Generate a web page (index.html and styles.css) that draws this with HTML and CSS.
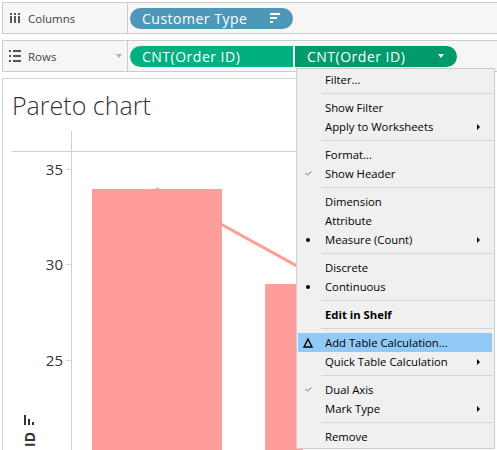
FILE: index.html
```html
<!DOCTYPE html>
<html>
<head>
<meta charset="utf-8">
<link rel="stylesheet" href="styles.css">
</head>
<body>
<div class="app">
  <div class="shelf shelf-columns">
    <div class="shelf-label">
      <svg class="shelf-icon" width="10" height="10" viewBox="0 0 10 10">
        <rect x="0" y="0" width="2" height="2"/><rect x="0" y="3" width="2" height="7"/>
        <rect x="4" y="0" width="2" height="2"/><rect x="4" y="3" width="2" height="7"/>
        <rect x="8" y="0" width="2" height="2"/><rect x="8" y="3" width="2" height="7"/>
      </svg>
      <span class="shelf-name">Columns</span>
    </div>
    <div class="shelf-body">
      <div class="pill pill-dim">
        <span class="pill-text">Customer Type</span>
        <svg class="pill-sort" width="10" height="10" viewBox="0 0 10 10">
          <rect x="0" y="0" width="10" height="2"/><rect x="0" y="4" width="7" height="2"/><rect x="0" y="8" width="3" height="2"/>
        </svg>
      </div>
    </div>
  </div>
  <div class="shelf shelf-rows">
    <div class="shelf-label">
      <svg class="shelf-icon" width="12" height="12" viewBox="0 0 12 12">
        <rect x="0" y="0" width="2" height="2"/><rect x="4" y="0" width="8" height="2"/>
        <rect x="0" y="5" width="2" height="2"/><rect x="4" y="5" width="8" height="2"/>
        <rect x="0" y="10" width="2" height="2"/><rect x="4" y="10" width="8" height="2"/>
      </svg>
      <span class="shelf-name">Rows</span>
      <span class="shelf-caret"></span>
    </div>
    <div class="shelf-body">
      <div class="pill pill-measure pill-left"><span class="pill-text">CNT(Order ID)</span></div>
      <div class="pill pill-measure-dark pill-right"><span class="pill-text">CNT(Order ID)</span><span class="pill-caret"></span></div>
    </div>
  </div>

  <div class="viz">
    <h1 class="viz-title">Pareto chart</h1>
    <svg class="chart" width="300" height="330" viewBox="0 0 300 330">
      <line class="axis" x1="68.5" y1="9" x2="68.5" y2="330"/>
      <line class="axis" x1="9" y1="29.5" x2="293" y2="29.5"/>
      <line class="tick" x1="63" y1="47.5" x2="68" y2="47.5"/>
      <line class="tick" x1="63" y1="142.5" x2="68" y2="142.5"/>
      <line class="tick" x1="63" y1="238.5" x2="68" y2="238.5"/>
      <text class="tick-label" x="60" y="53">35</text>
      <text class="tick-label" x="60" y="148">30</text>
      <text class="tick-label" x="60" y="244">25</text>
      <line class="pareto-line" x1="154" y1="67" x2="327" y2="162"/>
      <rect class="bar" x="89" y="67" width="130" height="270"/>
      <rect class="bar" x="262" y="162" width="130" height="170"/>
      <text class="axis-title" transform="translate(32 310) rotate(-90)">Count of Order ID</text>
      <rect class="axis-sort" x="21" y="293" width="2" height="10"/>
      <rect class="axis-sort" x="25" y="297" width="2" height="6"/>
      <rect class="axis-sort" x="29" y="300" width="2" height="3"/>
    </svg>
  </div>

  <div class="menu">
    <div class="mi"><span class="mi-icon"></span><span class="mi-label">Filter...</span></div>
    <div class="sep"></div>
    <div class="mi"><span class="mi-icon"></span><span class="mi-label">Show Filter</span></div>
    <div class="mi"><span class="mi-icon"></span><span class="mi-label">Apply to Worksheets</span><span class="mi-arrow"></span></div>
    <div class="sep"></div>
    <div class="mi"><span class="mi-icon"></span><span class="mi-label">Format...</span></div>
    <div class="mi"><span class="mi-icon"><svg width="7" height="5" viewBox="0 0 7 5"><polyline class="check" points="0.5,2 2.5,4 6.5,0.5"/></svg></span><span class="mi-label">Show Header</span></div>
    <div class="sep"></div>
    <div class="mi"><span class="mi-icon"></span><span class="mi-label">Dimension</span></div>
    <div class="mi"><span class="mi-icon"></span><span class="mi-label">Attribute</span></div>
    <div class="mi"><span class="mi-icon"><span class="bullet"></span></span><span class="mi-label">Measure (Count)</span><span class="mi-arrow"></span></div>
    <div class="sep"></div>
    <div class="mi"><span class="mi-icon"></span><span class="mi-label">Discrete</span></div>
    <div class="mi"><span class="mi-icon"><span class="bullet"></span></span><span class="mi-label">Continuous</span></div>
    <div class="sep"></div>
    <div class="mi"><span class="mi-icon"></span><span class="mi-label mi-bold">Edit in Shelf</span></div>
    <div class="sep"></div>
    <div class="mi mi-active"><span class="mi-icon"><svg width="10" height="10" viewBox="0 0 10 10"><polygon class="delta" points="5,1 9,9 1,9"/></svg></span><span class="mi-label">Add Table Calculation...</span></div>
    <div class="mi"><span class="mi-icon"></span><span class="mi-label">Quick Table Calculation</span><span class="mi-arrow"></span></div>
    <div class="sep"></div>
    <div class="mi"><span class="mi-icon"><svg width="7" height="5" viewBox="0 0 7 5"><polyline class="check" points="0.5,2 2.5,4 6.5,0.5"/></svg></span><span class="mi-label">Dual Axis</span></div>
    <div class="mi"><span class="mi-icon"></span><span class="mi-label">Mark Type</span><span class="mi-arrow"></span></div>
    <div class="sep"></div>
    <div class="mi"><span class="mi-icon"></span><span class="mi-label">Remove</span></div>
  </div>
</div>
</body>
</html>
```

FILE: styles.css
```css
html, body {
  margin: 0;
  padding: 0;
  background: #ffffff;
  font-family: "Open Sans", "Noto Sans", sans-serif;
  overflow: hidden;
}

.app {
  position: relative;
  width: 497px;
  height: 450px;
  overflow: hidden;
  padding-top: 2px;
  box-sizing: border-box;
}

/* Shelves */
.shelf {
  display: flex;
  height: 32px;
  box-sizing: border-box;
  margin-left: 2px;
  border: 1px solid #cbcbcb;
  border-right: none;
  background: #f6f6f6;
}

.shelf-rows {
  margin-top: 6px;
}

.shelf-label {
  width: 125px;
  box-sizing: border-box;
  border-right: 1px solid #cbcbcb;
  display: flex;
  align-items: center;
  padding-left: 6px;
  color: #444;
  font-size: 11.5px;
}

.shelf-icon {
  fill: #555;
  margin-right: 7px;
  flex: none;
}

.shelf-columns .shelf-icon {
  margin-left: 1px;
  margin-right: 8px;
}

.shelf-caret {
  margin-left: auto;
  margin-right: 5px;
  width: 0;
  height: 0;
  border-top: 4px solid #b3b3b3;
  border-left: 3.5px solid transparent;
  border-right: 3.5px solid transparent;
}

.shelf-body {
  display: flex;
  align-items: center;
  padding-left: 2px;
  gap: 2px;
}

.pill {
  display: flex;
  align-items: center;
  height: 21px;
  box-sizing: border-box;
  padding-left: 12px;
  color: #ffffff;
  font-size: 14px;
  letter-spacing: 0.5px;
  border-radius: 11px;
}

.pill-text {
  line-height: 21px;
  white-space: nowrap;
}

.pill-dim {
  width: 163px;
  background: #4e97b8;
}

.pill-sort {
  fill: #ffffff;
  margin-left: auto;
  margin-right: 13px;
}

.pill-measure {
  background: #00b180;
}

.pill-measure-dark {
  background: #009a6b;
}

.pill-left {
  width: 163px;
  border-radius: 11px 0 0 11px;
}

.pill-right {
  width: 162px;
  border-radius: 0 11px 11px 0;
}

.pill-caret {
  margin-left: auto;
  margin-right: 13px;
  width: 0;
  height: 0;
  border-top: 4px solid #ffffff;
  border-left: 3.5px solid transparent;
  border-right: 3.5px solid transparent;
}

/* Viz */
.viz {
  margin-top: 6px;
  margin-left: 2px;
  width: 296px;
  height: 380px;
  border-top: 1px solid #d4d4d4;
  border-left: 1px solid #d4d4d4;
  border-right: 1px solid #d4d4d4;
  background: #ffffff;
}

.viz-title {
  margin: 0;
  padding: 9px 0 0 9px;
  height: 34px;
  line-height: 34px;
  font-size: 25px;
  font-weight: 300;
  color: #333333;
}

.chart {
  display: block;
}

.axis {
  stroke: #d0d0d0;
  stroke-width: 1;
}

.tick {
  stroke: #d8d8d8;
  stroke-width: 1;
}

.tick-label {
  font-family: "Open Sans", sans-serif;
  font-size: 15px;
  fill: #333333;
  text-anchor: end;
}

.bar {
  fill: #ff9d9a;
}

.pareto-line {
  stroke: #ff9d9a;
  stroke-width: 3;
  stroke-linecap: round;
}

.axis-title {
  font-family: "Open Sans", sans-serif;
  font-size: 14px;
  font-weight: 700;
  fill: #333333;
  text-anchor: end;
}

.axis-sort {
  fill: #333333;
}

/* Menu */
.menu {
  position: absolute;
  left: 296px;
  top: 68px;
  width: 199px;
  box-sizing: border-box;
  padding: 1px 0 2px;
  background: #f0f0f0;
  border: 1px solid #cccccc;
  font-family: "Open Sans", sans-serif;
  font-size: 11.3px;
  color: #000000;
}

.mi {
  display: flex;
  align-items: center;
  height: 19px;
  margin: 0 2px 0 1px;
}

.mi-active {
  background: #91c9f7;
}

.mi-icon {
  width: 20px;
  height: 19px;
  flex: none;
  display: flex;
  align-items: center;
  justify-content: center;
}

.mi-label {
  margin-left: 7px;
  white-space: nowrap;
}

.mi-bold {
  font-weight: 700;
}

.mi-arrow {
  margin-left: auto;
  margin-right: 12px;
  width: 0;
  height: 0;
  border-left: 3px solid #000000;
  border-top: 3px solid transparent;
  border-bottom: 3px solid transparent;
}

.sep {
  height: 1px;
  margin: 4px 1px 4px 24px;
  background: #d5d5d5;
}

.check {
  fill: none;
  stroke: #777777;
  stroke-width: 1;
}

.bullet {
  width: 4px;
  height: 4px;
  border-radius: 50%;
  background: #000000;
}

.delta {
  fill: none;
  stroke: #000000;
  stroke-width: 1.4;
  stroke-linejoin: miter;
}
```
